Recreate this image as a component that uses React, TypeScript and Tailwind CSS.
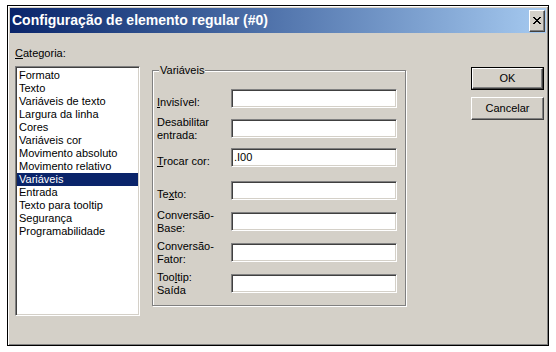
import type { ReactNode } from "react";

type Field = {
  label: ReactNode;
  twoLines?: boolean;
  gap: string;
  value?: string;
};

const categories = [
  "Formato",
  "Texto",
  "Variáveis de texto",
  "Largura da linha",
  "Cores",
  "Variáveis cor",
  "Movimento absoluto",
  "Movimento relativo",
  "Variáveis",
  "Entrada",
  "Texto para tooltip",
  "Segurança",
  "Programabilidade",
];

const fields: Field[] = [
  { label: <><span className="underline">I</span>nvisível:</>, gap: "mt-[18px]" },
  { label: <>Desabilitar<br />entrada:</>, twoLines: true, gap: "mt-[11px]" },
  { label: <><span className="underline">T</span>rocar cor:</>, gap: "mt-[10px]", value: ".I00" },
  { label: <>Te<span className="underline">x</span>to:</>, gap: "mt-[14px]" },
  { label: <>Conversão-<br />Base:</>, twoLines: true, gap: "mt-[12px]" },
  { label: <>Conversão-<br />Fator:</>, twoLines: true, gap: "mt-[12px]" },
  { label: <>Too<span className="underline">l</span>tip:<br />Saída</>, twoLines: true, gap: "mt-[12px]" },
];

const sunken =
  "border border-t-[#808080] border-l-[#808080] border-b-white border-r-white shadow-[inset_1px_1px_0_#404040,inset_-1px_-1px_0_#d4d0c8]";

const raised =
  "border border-t-white border-l-white border-b-[#404040] border-r-[#404040] shadow-[inset_-1px_-1px_0_#808080]";

function CloseGlyph() {
  const rows = [
    [0, 2, 6, 2],
    [1, 2, 5, 2],
    [2, 4],
    [3, 2],
    [2, 4],
    [1, 2, 5, 2],
    [0, 2, 6, 2],
  ];
  return (
    <svg width="8" height="7" viewBox="0 0 8 7" shapeRendering="crispEdges">
      {rows.map((r, y) => (
        <g key={y}>
          <rect x={r[0]} y={y} width={r[1]} height={1} fill="#000" />
          {r.length > 2 && <rect x={r[2]} y={y} width={r[3]} height={1} fill="#000" />}
        </g>
      ))}
    </svg>
  );
}

export default function App() {
  return (
    <div className="h-[352px] w-[556px] bg-white pl-[7px] pt-[5px] font-['Liberation_Sans',Arial,sans-serif] text-[11px] leading-[13px] text-black">
      <div className="flex h-[341px] w-[542px] flex-col border border-black bg-[#d4d0c8] p-[2px] shadow-[inset_1px_1px_0_#fff,inset_-1px_-1px_0_#808080]">
        {/* title bar */}
        <div className="flex h-[25px] shrink-0 items-center bg-linear-to-r from-[#0a246a] to-[#a6caf0] pl-[2px] pr-[1px]">
          <span className="text-[14px] font-bold leading-[17px] text-white">
            Configuração de elemento regular (#0)
          </span>
          <div className={`ml-auto flex h-[22px] w-[16px] items-center justify-center bg-[#d4d0c8] ${raised}`}>
            <CloseGlyph />
          </div>
        </div>

        {/* body */}
        <div className="flex flex-1 items-start pl-[5px] pr-[2px]">
          <div className="mt-[14px] w-[125px]">
            <div>
              <span className="underline">C</span>ategoria:
            </div>
            <div className={`mt-[6px] h-[250px] bg-white px-[1px] pt-[2px] ${sunken}`}>
              {categories.map((c) => (
                <div
                  key={c}
                  className={
                    c === "Variáveis"
                      ? "h-[13px] bg-[#0a246a] pl-[2px] text-white"
                      : "h-[13px] pl-[2px]"
                  }
                >
                  {c}
                </div>
              ))}
            </div>
          </div>

          <div className="relative ml-[12px] mt-[37px] h-[236px] w-[254px] border border-[#808080] pl-[4px] shadow-[inset_1px_1px_0_#fff,1px_1px_0_#fff]">
            <span className="absolute -top-[7px] left-[6px] bg-[#d4d0c8] px-[1px]">Variáveis</span>
            {fields.map((f, i) => (
              <div key={i} className={`flex h-[19px] items-center ${f.gap}`}>
                <div className={f.twoLines ? "w-[74px] shrink-0" : "w-[74px] shrink-0 pt-[8px]"}>
                  {f.label}
                </div>
                <div className={`flex h-[19px] w-[166px] items-center bg-white pl-[2px] ${sunken}`}>
                  {f.value}
                </div>
              </div>
            ))}
          </div>

          <div className="ml-auto mt-[34px] flex w-[73px] flex-col">
            <div className="h-[23px] border border-black">
              <div className={`flex h-full items-center justify-center ${raised}`}>OK</div>
            </div>
            <div className={`mt-[7px] flex h-[23px] items-center justify-center ${raised}`}>
              Cancelar
            </div>
          </div>
        </div>
      </div>
    </div>
  );
}
